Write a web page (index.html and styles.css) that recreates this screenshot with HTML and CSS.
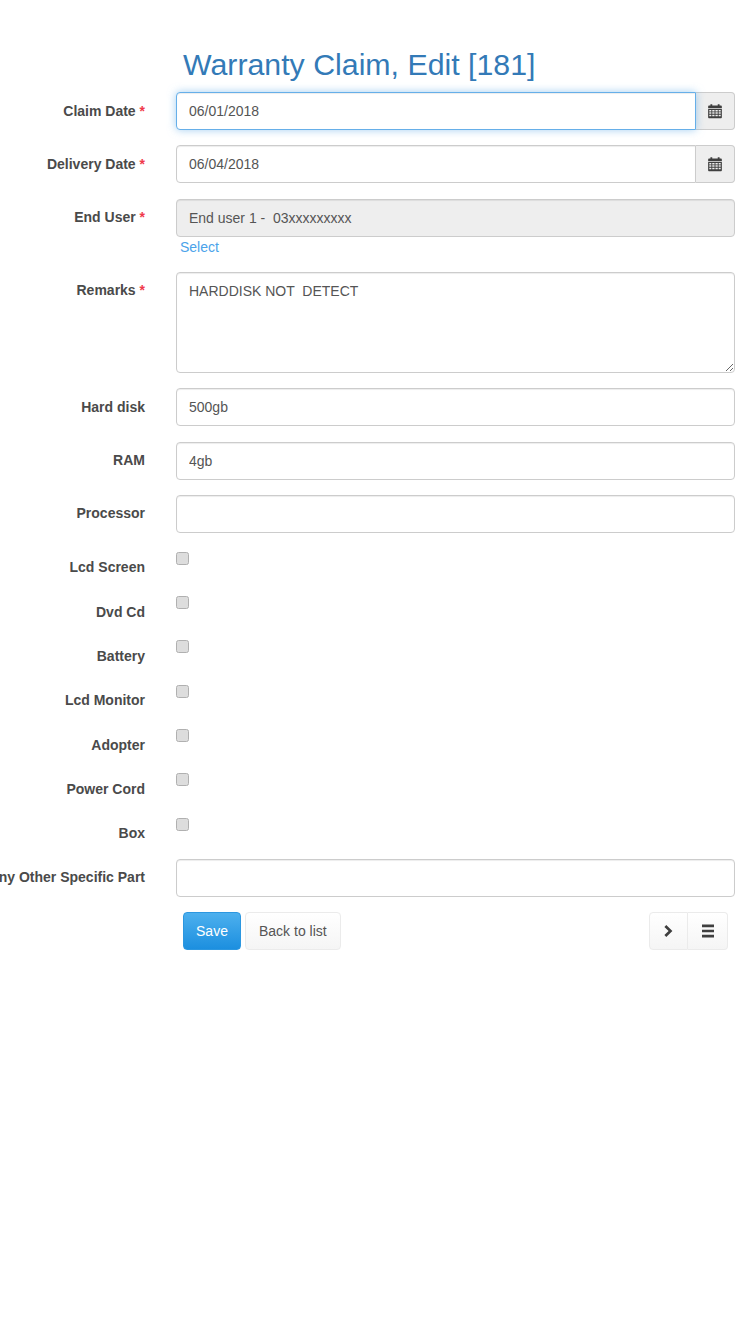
FILE: index.html
```html
<!DOCTYPE html>
<html lang="en">
<head>
<meta charset="utf-8">
<title>Warranty Claim, Edit [181]</title>
<link rel="stylesheet" href="styles.css">
</head>
<body>
<main class="page">
  <h1 class="title">Warranty Claim, Edit [181]</h1>
  <form class="form">
    <div class="row">
      <label class="label">Claim Date <span class="req">*</span></label>
      <div class="field group">
        <input class="input input-focus" type="text" value="06/01/2018">
        <span class="addon"><svg class="cal" viewBox="0 0 14 14"><path d="M1 3.2C1 2.6 1.4 2.2 2 2.2H3V1H4.6V2.2H9.4V1H11V2.2H12C12.6 2.2 13 2.6 13 3.2V4.6H1Z"/><path fill-rule="evenodd" d="M1 5.2H13V12.4C13 13 12.6 13.4 12 13.4H2C1.4 13.4 1 13 1 12.4ZM2 6.2V7.4H3.8V6.2ZM4.6 6.2V7.4H6.6V6.2ZM7.4 6.2V7.4H9.4V6.2ZM10.2 6.2V7.4H12V6.2ZM2 8.2V9.4H3.8V8.2ZM4.6 8.2V9.4H6.6V8.2ZM7.4 8.2V9.4H9.4V8.2ZM10.2 8.2V9.4H12V8.2ZM2 10.2V11.6H3.8V10.2ZM4.6 10.2V11.6H6.6V10.2ZM7.4 10.2V11.6H9.4V10.2ZM10.2 10.2V11.6H12V10.2Z"/></svg></span>
      </div>
    </div>
    <div class="row">
      <label class="label">Delivery Date <span class="req">*</span></label>
      <div class="field group">
        <input class="input" type="text" value="06/04/2018">
        <span class="addon"><svg class="cal" viewBox="0 0 14 14"><path d="M1 3.2C1 2.6 1.4 2.2 2 2.2H3V1H4.6V2.2H9.4V1H11V2.2H12C12.6 2.2 13 2.6 13 3.2V4.6H1Z"/><path fill-rule="evenodd" d="M1 5.2H13V12.4C13 13 12.6 13.4 12 13.4H2C1.4 13.4 1 13 1 12.4ZM2 6.2V7.4H3.8V6.2ZM4.6 6.2V7.4H6.6V6.2ZM7.4 6.2V7.4H9.4V6.2ZM10.2 6.2V7.4H12V6.2ZM2 8.2V9.4H3.8V8.2ZM4.6 8.2V9.4H6.6V8.2ZM7.4 8.2V9.4H9.4V8.2ZM10.2 8.2V9.4H12V8.2ZM2 10.2V11.6H3.8V10.2ZM4.6 10.2V11.6H6.6V10.2ZM7.4 10.2V11.6H9.4V10.2ZM10.2 10.2V11.6H12V10.2Z"/></svg></span>
      </div>
    </div>
    <div class="row row-select">
      <label class="label">End User <span class="req">*</span></label>
      <div class="field">
        <input class="input input-readonly" type="text" value="End user 1 -  03xxxxxxxxx" readonly>
        <a class="select-link" href="#">Select</a>
      </div>
    </div>
    <div class="row">
      <label class="label">Remarks <span class="req">*</span></label>
      <div class="field"><textarea class="input textarea">HARDDISK NOT  DETECT</textarea></div>
    </div>
    <div class="row">
      <label class="label">Hard disk</label>
      <div class="field"><input class="input" type="text" value="500gb"></div>
    </div>
    <div class="row">
      <label class="label">RAM</label>
      <div class="field"><input class="input" type="text" value="4gb"></div>
    </div>
    <div class="row row-before-checks">
      <label class="label">Processor</label>
      <div class="field"><input class="input" type="text"></div>
    </div>
    <div class="row row-check"><label class="label">Lcd Screen</label><div class="field"><input class="check" type="checkbox"></div></div>
    <div class="row row-check"><label class="label">Dvd Cd</label><div class="field"><input class="check" type="checkbox"></div></div>
    <div class="row row-check"><label class="label">Battery</label><div class="field"><input class="check" type="checkbox"></div></div>
    <div class="row row-check"><label class="label">Lcd Monitor</label><div class="field"><input class="check" type="checkbox"></div></div>
    <div class="row row-check"><label class="label">Adopter</label><div class="field"><input class="check" type="checkbox"></div></div>
    <div class="row row-check"><label class="label">Power Cord</label><div class="field"><input class="check" type="checkbox"></div></div>
    <div class="row row-check row-last-check"><label class="label">Box</label><div class="field"><input class="check" type="checkbox"></div></div>
    <div class="row">
      <label class="label">Any Other Specific Part</label>
      <div class="field"><input class="input" type="text"></div>
    </div>
    <div class="actions">
      <button class="btn btn-primary" type="button">Save</button>
      <button class="btn btn-default" type="button">Back to list</button>
      <div class="pager">
        <button class="btn btn-default btn-icon btn-left" type="button" aria-label="Next"><svg class="ico" viewBox="0 0 14 14"><path d="M3.4 2.9 5.3 1 11.4 7 5.3 13 3.4 11.1 7.6 7Z" fill="#3f3f3f"/></svg></button>
        <button class="btn btn-default btn-icon btn-right" type="button" aria-label="List"><svg class="ico" viewBox="0 0 14 14"><path d="M1 .6H13V3.2H1ZM1 5.7H13V8.3H1ZM1 10.8H13V13.4H1Z" fill="#3f3f3f"/></svg></button>
      </div>
    </div>
  </form>
</main>
</body>
</html>
```
FILE: styles.css
```css
* { box-sizing: border-box; }
html, body { margin: 0; padding: 0; background: #fff; }
body {
  font-family: "Liberation Sans", Arial, sans-serif;
  font-size: 14px;
  color: #555;
  overflow: hidden;
  height: 1334px;
}
.page { padding-top: 46px; }
.title {
  margin: 0 0 8px 183px;
  font-size: 30.3px;
  line-height: 38px;
  font-weight: 400;
  color: #337ab7;
  white-space: nowrap;
}
.row {
  display: flex;
  margin-bottom: 15.3px;
  min-height: 38px;
}
.row-select { margin-bottom: 15.4px; }
.row-before-checks { margin-bottom: 19px; }
.row-check { min-height: 0; height: 44.3px; margin: 0; }
.row-last-check { height: 41px; }
.label {
  flex: 0 0 145px;
  min-width: 0;
  display: flex;
  justify-content: flex-end;
  white-space: pre;
  font-weight: 700;
  font-size: 14px;
  line-height: 20px;
  padding-top: 8.5px;
  color: #4a4a4a;
  margin-right: 31px;
}
.row-check .label { padding-top: 5.5px; }
.req { color: #f0394b; }
.field { flex: 1 1 auto; margin-right: 15px; min-width: 0; }
.group { display: flex; }
.input {
  display: block;
  width: 100%;
  height: 38px;
  padding: 8px 12px;
  font-family: inherit;
  font-size: 14px;
  color: #555;
  background: #fff;
  border: 1px solid #ccc;
  border-radius: 4px;
  box-shadow: inset 0 1px 1px rgba(0,0,0,.075);
  outline: none;
}
.group .input { border-radius: 4px 0 0 4px; }
.input-focus {
  border-color: #66afe9;
  box-shadow: inset 0 1px 1px rgba(0,0,0,.075), 0 0 8px rgba(102,175,233,.6);
  position: relative;
  z-index: 1;
}
.input-readonly { background: #eee; }
.textarea { height: 101px; padding-top: 9px; resize: vertical; line-height: 18px; }
.addon {
  flex: 0 0 39.5px;
  display: flex;
  align-items: center;
  justify-content: center;
  background: #eee;
  border: 1px solid #ccc;
  border-left: 0;
  border-radius: 0 4px 4px 0;
}
.cal { width: 16px; height: 16px; fill: #3f3f3f; }
.select-link {
  display: block;
  margin: 0 0 0 4px;
  font-size: 14px;
  line-height: 20px;
  color: #4ba3ea;
  text-decoration: none;
}
.check {
  appearance: none;
  -webkit-appearance: none;
  display: block;
  width: 12.5px;
  height: 13px;
  margin: 0;
  background: #ddd;
  border: 1px solid #b0b0b0;
  border-radius: 2.5px;
}
.actions {
  display: flex;
  align-items: flex-start;
  gap: 4px;
  padding-left: 183px;
  padding-right: 22px;
}
.btn {
  height: 38px;
  padding: 0 13px;
  font-family: inherit;
  font-size: 14px;
  border-radius: 4px;
  border: 1px solid #ebebeb;
}
.btn-primary {
  width: 58px;
  padding: 0;
  color: #fff;
  background: linear-gradient(#4db0ee, #1c8fdf);
  border-color: #2c97e0;
}
.btn-default { color: #555; background: linear-gradient(#fff, #f5f5f5); }
.pager { margin-left: auto; display: flex; }
.btn-icon {
  width: 40px;
  padding: 0;
  display: flex;
  align-items: center;
  justify-content: center;
}
.btn-left { width: 39.5px; border-radius: 4px 0 0 4px; }
.btn-right { border-radius: 0 4px 4px 0; border-left: 0; }
.ico { width: 14px; height: 14px; display: block; }
```
